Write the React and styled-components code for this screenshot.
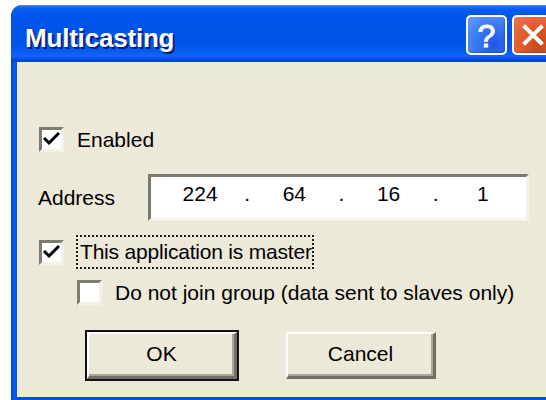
import React from "react";
import styled, { createGlobalStyle } from "styled-components";

const Global = createGlobalStyle`
  html, body {
    margin: 0;
    padding: 0;
    background: #ffffff;
    overflow: hidden;
    width: 546px;
    height: 400px;
  }
  body {
    font-family: "Liberation Sans", Arial, sans-serif;
  }
`;

const Page = styled.div`
  width: 546px;
  height: 400px;
  overflow: hidden;
  padding: 5px 0 0 11px;
  box-sizing: border-box;
`;

const Frame = styled.div`
  width: 552px;
  height: 400px;
  display: flex;
  flex-direction: column;
  border-radius: 11px 11px 0 0;
  background: linear-gradient(90deg, #0a3fd0 0px, #0058ee 2px, #0a5cf0 4px, #0050e0 6px);
  box-sizing: border-box;
  padding: 0 6px 8px 6px;
  position: relative;
  overflow: hidden;
`;

const TitleBar = styled.div`
  height: 57px;
  margin: 0 -6px;
  padding: 0 10px 0 14px;
  display: flex;
  align-items: flex-start;
  justify-content: space-between;
  border-radius: 11px 11px 0 0;
  background: linear-gradient(
    180deg,
    #4a8ff9 0px,
    #1a68f2 2px,
    #0a5ff0 4px,
    #0058ee 8px,
    #0054e8 24px,
    #0055ea 40px,
    #0a5ef2 48px,
    #1566f4 51px,
    #0050dc 54px,
    #003fc8 57px
  );
`;

const Title = styled.span`
  margin-top: 18px;
  font-family: "Liberation Sans", Arial, sans-serif;
  font-weight: bold;
  font-size: 26px;
  line-height: 30px;
  letter-spacing: -0.2px;
  color: #ffffff;
  text-shadow: 2px 2px 0 #0a1e7a;
`;

const CaptionButtons = styled.div`
  margin-top: 10px;
  display: flex;
  gap: 5px;
`;

const CaptionButton = styled.div`
  width: 41px;
  height: 40px;
  box-sizing: border-box;
  border-radius: 5px;
  border: 2px solid #ffffff;
  display: flex;
  align-items: center;
  justify-content: center;
  color: #ffffff;
  background: ${(p) =>
    p.$kind === "close"
      ? "radial-gradient(circle at 70% 75%, #cc4614 0%, #e0582b 45%, #e97a52 100%)"
      : "radial-gradient(circle at 70% 75%, #1f55e6 0%, #3e7cf5 55%, #6a9ef9 100%)"};
  box-shadow: inset -1px -1px 2px rgba(0, 0, 0, 0.25);
`;

const HelpGlyph = styled.span`
  font-family: "Liberation Sans", Arial, sans-serif;
  font-size: 32px;
  line-height: 1;
  margin-top: 1px;
  -webkit-text-stroke: 1px #ffffff;
`;

const Client = styled.div`
  flex: 1;
  background: #ece9d8;
  padding: 65px 0 0 22px;
  display: flex;
  flex-direction: column;
  color: #000000;
  font-family: "Liberation Sans", Arial, sans-serif;
  font-size: 21px;
`;

const Row = styled.div`
  display: flex;
  align-items: center;
  margin-top: ${(p) => p.$top || 0}px;
  margin-left: ${(p) => p.$indent || 0}px;
  height: ${(p) => (p.$h ? `${p.$h}px` : "auto")};
`;

const Box = styled.span`
  width: 25px;
  height: 25px;
  box-sizing: border-box;
  flex: none;
  background: #ffffff;
  border-style: solid;
  border-width: 3px;
  border-color: #7e7c70 #f2f1ea #f2f1ea #7e7c70;
  display: flex;
  align-items: center;
  justify-content: center;
  margin-right: ${(p) => p.$gap}px;
`;

const Label = styled.span`
  white-space: nowrap;
  line-height: 24px;
`;

const FocusLabel = styled.span`
  white-space: nowrap;
  line-height: 24px;
  letter-spacing: -0.2px;
  padding: 3px 0 3px 2px;
  border: 2px dotted #1a1a1a;
`;

const FieldLabel = styled.span`
  width: 110px;
  flex: none;
  margin-left: -1px;
`;

const IpBox = styled.div`
  width: 381px;
  height: 47px;
  box-sizing: border-box;
  background: #ffffff;
  border-style: solid;
  border-width: 3px;
  border-color: #7b786d #f3f2ec #f3f2ec #7b786d;
  display: grid;
  grid-template-columns: 1fr auto 1fr auto 1fr auto 1fr;
  align-items: center;
  padding-bottom: 8px;
  padding-left: 6px;
`;

const Octet = styled.span`
  text-align: center;
`;

const Dot = styled.span`
  width: 8px;
  text-align: center;
`;

const Buttons = styled.div`
  display: flex;
  gap: 49px;
  margin-top: 27px;
  margin-left: 48px;
`;

const PushButton = styled.div`
  width: 150px;
  height: 47px;
  box-sizing: border-box;
  background: #ece9d8;
  display: flex;
  align-items: center;
  justify-content: center;
  border-style: solid;
  border-width: 2px 3px 3px 2px;
  border-color: #ffffff #716f64 #716f64 #ffffff;
  box-shadow: inset -2px -2px 0 #aca899;
  ${(p) =>
    p.$default &&
    `
    outline: 2px solid #111111;
    outline-offset: 0;
  `}
`;

const ButtonText = styled.span`
  line-height: 24px;
  padding-bottom: 2px;
`;

function Check() {
  return (
    <svg width="17" height="15" viewBox="0 0 17 15">
      <polyline
        points="2,7 6,11 15,2"
        fill="none"
        stroke="#000"
        strokeWidth="3"
        strokeLinecap="square"
      />
    </svg>
  );
}

function CheckBox({ checked, gap = 13 }) {
  return <Box $gap={gap}>{checked ? <Check /> : null}</Box>;
}

export default function App() {
  return (
    <>
      <Global />
      <Page>
        <Frame>
          <TitleBar>
            <Title>Multicasting</Title>
            <CaptionButtons>
              <CaptionButton $kind="help">
                <HelpGlyph>?</HelpGlyph>
              </CaptionButton>
              <CaptionButton $kind="close">
                <svg width="22" height="22" viewBox="0 0 22 22">
                  <path
                    d="M3 3 L19 19 M19 3 L3 19"
                    stroke="#fff"
                    strokeWidth="4"
                    strokeLinecap="square"
                  />
                </svg>
              </CaptionButton>
            </CaptionButtons>
          </TitleBar>
          <Client>
            <Row $h={25}>
              <CheckBox checked />
              <Label>Enabled</Label>
            </Row>
            <Row $top={22}>
              <FieldLabel>Address</FieldLabel>
              <IpBox>
                <Octet>224</Octet>
                <Dot>.</Dot>
                <Octet>64</Octet>
                <Dot>.</Dot>
                <Octet>16</Octet>
                <Dot>.</Dot>
                <Octet>1</Octet>
              </IpBox>
            </Row>
            <Row $top={14}>
              <CheckBox checked gap={12} />
              <FocusLabel>This application is master</FocusLabel>
            </Row>
            <Row $top={11} $indent={38} $h={25}>
              <CheckBox />
              <Label>Do not join group (data sent to slaves only)</Label>
            </Row>
            <Buttons>
              <PushButton $default>
                <ButtonText>OK</ButtonText>
              </PushButton>
              <PushButton>
                <ButtonText>Cancel</ButtonText>
              </PushButton>
            </Buttons>
          </Client>
        </Frame>
      </Page>
    </>
  );
}
